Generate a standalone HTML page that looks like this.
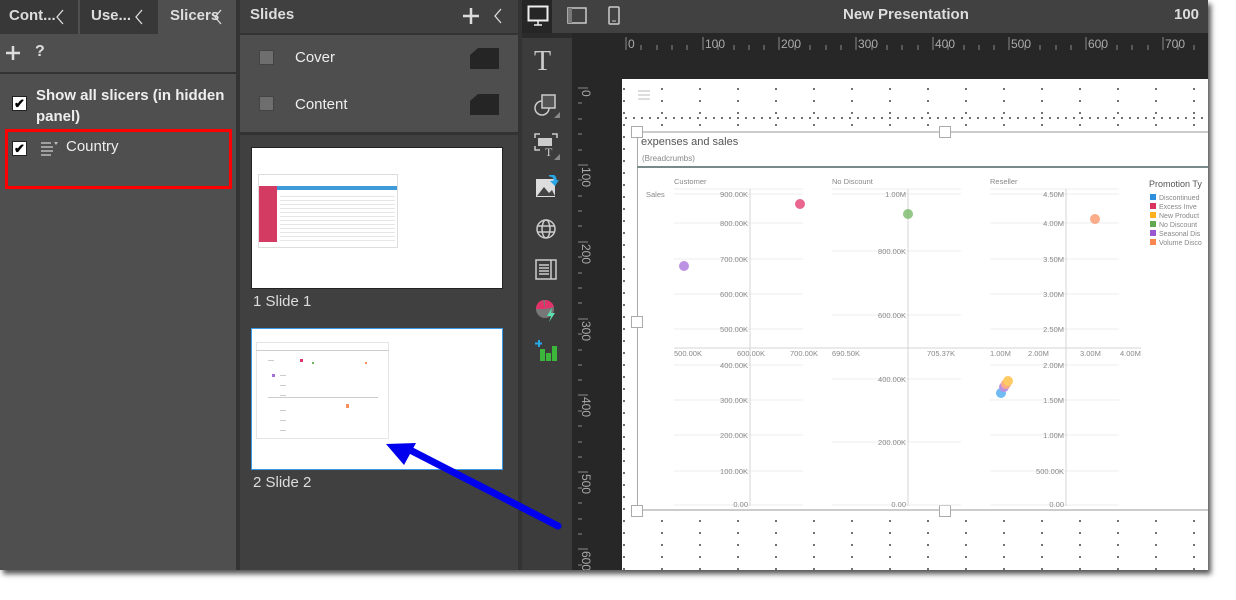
<!DOCTYPE html>
<html><head><meta charset="utf-8"><style>
*{margin:0;padding:0;box-sizing:border-box}
body{width:1236px;height:600px;background:#fff;position:relative;overflow:hidden;font-family:"Segoe UI","Liberation Sans",sans-serif;color:#eee}
.a{position:absolute}
</style></head><body>
<div class="a" style="left:0;top:0;width:1208px;height:570px;background:#2b2b2b;box-shadow:3px 4px 5px #555"></div>
<div class="a" style="left:0;top:0;width:236px;height:570px;background:#4f4f4f"></div>
<div class="a" style="left:0;top:0;width:78px;height:34px;background:#383838"></div>
<div class="a" style="left:80px;top:0;width:78px;height:34px;background:#383838"></div>
<div class="a" style="left:160px;top:0;width:76px;height:34px;background:#4f4f4f"></div>
<div class="a" style="left:9px;top:7px;font-size:15px;font-weight:bold;color:#ddd">Cont...</div>
<svg class="a" style="left:55px;top:9px" width="10" height="16"><path d="M8 1L2 8l6 7" stroke="#ddd" stroke-width="1.3" fill="none"/></svg>
<div class="a" style="left:91px;top:7px;font-size:15px;font-weight:bold;color:#ddd">Use...</div>
<svg class="a" style="left:134px;top:9px" width="10" height="16"><path d="M8 1L2 8l6 7" stroke="#ddd" stroke-width="1.3" fill="none"/></svg>
<div class="a" style="left:170px;top:7px;font-size:15px;font-weight:bold;color:#ddd">Slicers</div>
<svg class="a" style="left:213px;top:9px" width="10" height="16"><path d="M8 1L2 8l6 7" stroke="#ddd" stroke-width="1.3" fill="none"/></svg>
<svg class="a" style="left:5px;top:45px" width="16" height="16"><path d="M8 1v14M1 8h14" stroke="#ddd" stroke-width="2.5"/></svg>
<div class="a" style="left:35px;top:43px;font-size:16px;font-weight:bold;color:#ddd">?</div>
<div class="a" style="left:0;top:72px;width:236px;height:2px;background:#333"></div>
<div class="a" style="left:12px;top:96px;width:15px;height:15px;background:#fff;border:1px solid #222;color:#000;font-size:13px;line-height:13px;text-align:center;font-weight:bold">✔</div>
<div class="a" style="left:36px;top:85px;font-size:15px;font-weight:bold;color:#eee;line-height:21px;width:195px">Show all slicers (in hidden panel)</div>
<div class="a" style="left:5px;top:129px;width:227px;height:60px;border:3px solid #f00"></div>
<div class="a" style="left:12px;top:141px;width:15px;height:15px;background:#fff;border:1px solid #222;color:#000;font-size:13px;line-height:13px;text-align:center;font-weight:bold">✔</div>
<svg class="a" style="left:40px;top:141px" width="20" height="16"><g stroke="#bbb" stroke-width="1.5"><path d="M1 2h10M1 6h12M1 10h12M1 14h10"/></g><path d="M14 1h4l-2 3z" fill="#bbb"/></svg>
<div class="a" style="left:66px;top:138px;font-size:15px;color:#eee">Country</div>
<div class="a" style="left:236px;top:0;width:4px;height:570px;background:#333"></div>
<div class="a" style="left:240px;top:0;width:278px;height:570px;background:#404040"></div>
<div class="a" style="left:240px;top:33px;width:278px;height:2px;background:#333"></div>
<div class="a" style="left:250px;top:6px;font-size:15px;font-weight:bold;color:#ddd">Slides</div>
<svg class="a" style="left:462px;top:7px" width="18" height="18"><path d="M9 1v16M1 9h16" stroke="#ddd" stroke-width="2.5"/></svg>
<svg class="a" style="left:493px;top:8px" width="10" height="16"><path d="M8 1L2 8l6 7" stroke="#ddd" stroke-width="1.3" fill="none"/></svg>
<div class="a" style="left:240px;top:35px;width:278px;height:97px;background:#4e4e4e"></div>
<div class="a" style="left:240px;top:132px;width:278px;height:3px;background:#333"></div>
<div class="a" style="left:259px;top:50px;width:15px;height:15px;background:#6e6e6e;border:1px solid #444"></div>
<div class="a" style="left:295px;top:49px;font-size:15px;color:#eee">Cover</div>
<div class="a" style="left:259px;top:96px;width:15px;height:15px;background:#6e6e6e;border:1px solid #444"></div>
<div class="a" style="left:295px;top:96px;font-size:15px;color:#eee">Content</div>
<svg class="a" style="left:470px;top:48px" width="30" height="22"><path d="M8 0H29V21H0V7z" fill="#252525"/></svg>
<svg class="a" style="left:470px;top:94px" width="30" height="22"><path d="M8 0H29V21H0V7z" fill="#252525"/></svg>
<div class="a" style="left:251px;top:147px;width:252px;height:142px;background:#fff;border:1px solid #222"></div>
<div class="a" style="left:258px;top:174px;width:140px;height:74px;border:1px solid #ddd;background:#fff"></div>
<div class="a" style="left:259px;top:186px;width:18px;height:56px;background:#d33b63"></div>
<div class="a" style="left:277px;top:186px;width:120px;height:4px;background:#3f9ad9"></div>
<div class="a" style="left:280px;top:193px;width:115px;height:48px;background:repeating-linear-gradient(#fff 0 3px,#e6e6e6 3px 4px)"></div>
<div class="a" style="left:253px;top:293px;font-size:15px;color:#ddd">1 Slide 1</div>
<div class="a" style="left:251px;top:328px;width:252px;height:142px;background:#fff;border:1px solid #3a9ae8"></div>
<div class="a" style="left:256px;top:342px;width:133px;height:97px;border:1px solid #e6e6e6"></div>
<div class="a" style="left:256px;top:350px;width:133px;height:1px;background:#ccc"></div>
<div class="a" style="left:253px;top:474px;font-size:15px;color:#ddd">2 Slide 2</div>
<div class="a" style="left:518px;top:0;width:4px;height:570px;background:#333"></div>
<div class="a" style="left:522px;top:0;width:686px;height:33px;background:#414141"></div>
<div class="a" style="left:522px;top:0;width:30px;height:33px;background:#262626"></div>
<svg class="a" style="left:527px;top:5px" width="22" height="22"><rect x="1.5" y="1.5" width="19" height="14" fill="none" stroke="#eee" stroke-width="2"/><path d="M11 16v4M7 20h8" stroke="#eee" stroke-width="1.5"/></svg>
<svg class="a" style="left:567px;top:7px" width="20" height="18"><rect x="1" y="1" width="18" height="15" fill="none" stroke="#ccc" stroke-width="1.5"/><rect x="1" y="1" width="4" height="15" fill="#777"/></svg>
<svg class="a" style="left:608px;top:6px" width="12" height="20"><rect x="1" y="1" width="10" height="17" rx="1" fill="none" stroke="#ccc" stroke-width="1.5"/><path d="M4 15h4" stroke="#ccc"/></svg>
<div class="a" style="left:843px;top:6px;font-size:15px;font-weight:bold;color:#ddd">New Presentation</div>
<div class="a" style="left:1174px;top:6px;font-size:15px;font-weight:bold;color:#ddd">100</div>
<div class="a" style="left:522px;top:38px;width:50px;height:532px;background:#3c3c3c"></div>
<div class="a" style="left:534px;top:47px;font-family:'Liberation Serif',serif;font-size:28px;color:#ccc;line-height:30px">T</div>
<svg class="a" style="left:532px;top:90px" width="30" height="30"><circle cx="10" cy="18" r="7" fill="none" stroke="#ccc" stroke-width="1.5"/><rect x="10" y="5" width="13" height="13" fill="#555" stroke="#ccc" stroke-width="1.5"/><path d="M22 28h6v-6z" fill="#888"/></svg>
<svg class="a" style="left:532px;top:132px" width="30" height="30"><path d="M3 6V2h5M3 14v4h5M20 2h5v4" stroke="#ccc" stroke-width="1.5" fill="none"/><rect x="6" y="6" width="14" height="8" fill="#ccc"/><text x="13" y="24" fill="#ccc" font-size="12" font-family="Liberation Serif">T</text><path d="M22 28h6v-6z" fill="#888"/></svg>
<svg class="a" style="left:535px;top:175px" width="24" height="24"><rect x="1" y="4" width="19" height="18" fill="#ddd"/><path d="M2 21l7-9 5 6 3-3 3 6z" fill="#444"/><path d="M14 0c5 0 7 3 6 8" stroke="#29a8e8" stroke-width="3" fill="none"/><path d="M15 6l5 5 4-6z" fill="#29a8e8"/></svg>
<svg class="a" style="left:535px;top:218px" width="22" height="22"><circle cx="11" cy="11" r="9" fill="none" stroke="#ccc" stroke-width="1.5"/><ellipse cx="11" cy="11" rx="4" ry="9" fill="none" stroke="#ccc" stroke-width="1.5"/><path d="M2 8h18M2 14h18" stroke="#ccc" stroke-width="1.5"/></svg>
<svg class="a" style="left:535px;top:259px" width="22" height="22"><rect x="1" y="1" width="20" height="19" fill="none" stroke="#ccc" stroke-width="1.5"/><path d="M4 6h10M4 9h10M4 12h10M4 15h10M16 1v19" stroke="#ccc" stroke-width="1.5"/></svg>
<svg class="a" style="left:535px;top:298px" width="24" height="24"><circle cx="10" cy="11" r="9" fill="#777"/><path d="M10 11V2a9 9 0 0 1 9 7zM10 11H1a9 9 0 0 1 7-9z" fill="#e0336a"/><path d="M17 10l-5 8h4l-2 6 6-9h-4z" fill="#5de0b0"/></svg>
<svg class="a" style="left:535px;top:340px" width="24" height="24"><path d="M4 0v7M0 3.5h7" stroke="#29a8e8" stroke-width="2"/><rect x="5" y="9" width="5" height="12" fill="#3cb73c"/><rect x="11" y="13" width="5" height="8" fill="#3cb73c"/><rect x="17" y="6" width="5" height="15" fill="#3cb73c"/></svg>
<svg class="a" style="left:572px;top:33px" width="636" height="537">
<rect x="0" y="0" width="636" height="537" fill="#272727"/>
<g stroke="#888" stroke-width="1">
<path d="M54 4v13M131 4v13M207 4v13M284 4v13M361 4v13M437 4v13M514 4v13M591 4v13"/>
<path d="M69 12v5M85 12v5M100 12v5M115 12v5M146 12v5M162 12v5M177 12v5M192 12v5M223 12v5M238 12v5M254 12v5M269 12v5M300 12v5M315 12v5M330 12v5M346 12v5M376 12v5M392 12v5M407 12v5M422 12v5M453 12v5M468 12v5M484 12v5M499 12v5M530 12v5M545 12v5M560 12v5M576 12v5M606 12v5M622 12v5"/>
</g>
<g fill="#aaa" font-size="12" font-family="Liberation Sans"><text x="56" y="15">0</text><text x="133" y="15">100</text><text x="209" y="15">200</text><text x="286" y="15">300</text><text x="363" y="15">400</text><text x="439" y="15">500</text><text x="516" y="15">600</text><text x="593" y="15">700</text></g>
<g stroke="#888"><path d="M6 55h10M6 132h10M6 209h10M6 286h10M6 362h10M6 439h10M6 516h10"/>
<path d="M6 70h4M6 86h4M6 101h4M6 117h4M6 147h4M6 163h4M6 178h4M6 193h4M6 224h4M6 240h4M6 255h4M6 270h4M6 301h4M6 317h4M6 332h4M6 347h4M6 378h4M6 393h4M6 409h4M6 424h4M6 455h4M6 470h4M6 486h4M6 501h4M6 532h4"/></g>
<g fill="#aaa" font-size="12" font-family="Liberation Sans"><text transform="translate(10,57) rotate(90)">0</text><text transform="translate(10,134) rotate(90)">100</text><text transform="translate(10,211) rotate(90)">200</text><text transform="translate(10,288) rotate(90)">300</text><text transform="translate(10,364) rotate(90)">400</text><text transform="translate(10,441) rotate(90)">500</text><text transform="translate(10,518) rotate(90)">600</text></g>
</svg>
<div class="a" style="left:622px;top:79px;width:586px;height:491px;background-color:#fff;background-image:radial-gradient(circle,#555 0.8px,transparent 1.2px);background-size:38px 12px;background-position:21px 4px"></div>
<div class="a" style="left:622px;top:117px;width:586px;height:2px;background-image:radial-gradient(circle,#555 0.8px,transparent 1.2px);background-size:8px 2px"></div>
<svg class="a" style="left:638px;top:90px" width="14" height="12"><path d="M0 1h12M0 5h12M0 9h12" stroke="#bbb"/></svg>
<div class="a" style="left:637px;top:131px;width:571px;height:380px;background:#fff;border-left:1px solid #aaa;border-top:2px solid #ccc;border-bottom:2px solid #ccc"></div>
<div class="a" style="left:637px;top:166px;width:571px;height:2px;background:#7a8a8a"></div>
<div class="a" style="left:641px;top:136px;font-size:11px;color:#555">expenses and sales</div>
<div class="a" style="left:642px;top:154px;font-size:8px;color:#888">(Breadcrumbs)</div>
<svg class="a" style="left:0;top:0" width="1208" height="570">
<g fill="#fff" stroke="#aaa" stroke-width="1"><rect x="631.5" y="126.5" width="11" height="11"/><rect x="939.5" y="126.5" width="11" height="11"/><rect x="631.5" y="316.5" width="11" height="11"/><rect x="631.5" y="505.5" width="11" height="11"/><rect x="939.5" y="505.5" width="11" height="11"/></g>
<g font-family="Liberation Sans" font-size="7.5" fill="#888">
<text x="674" y="184">Customer</text><text x="832" y="184">No Discount</text><text x="990" y="184">Reseller</text><text x="646" y="197">Sales</text>
</g>
<g stroke="#ececec" stroke-width="1">
<path d="M674 189h129M832 189h129M990 189h129"/>
<path d="M674 194h129M674 223h129M674 259h129M674 294h129M674 329h129M674 365h129M674 400h129M674 435h129M674 471h129M674 505h129"/>
<path d="M832 194h129M832 251h129M832 315h129M832 379h129M832 442h129M832 505h129"/>
<path d="M990 194h129M990 223h129M990 259h129M990 294h129M990 329h129M990 365h129M990 400h129M990 435h129M990 471h129M990 505h129"/>
</g>
<g stroke="#d4d4d4" stroke-width="1"><path d="M750 189v317M908 189v317M1066 189v317M674 348h467"/></g>
<g font-family="Liberation Sans" font-size="7.5" fill="#888" text-anchor="end">
<text x="748" y="197">900.00K</text><text x="748" y="226">800.00K</text><text x="748" y="262">700.00K</text><text x="748" y="297">600.00K</text><text x="748" y="332">500.00K</text><text x="748" y="368">400.00K</text><text x="748" y="403">300.00K</text><text x="748" y="438">200.00K</text><text x="748" y="474">100.00K</text><text x="748" y="507">0.00</text>
<text x="906" y="197">1.00M</text><text x="906" y="254">800.00K</text><text x="906" y="318">600.00K</text><text x="906" y="382">400.00K</text><text x="906" y="445">200.00K</text><text x="906" y="507">0.00</text>
<text x="1064" y="197">4.50M</text><text x="1064" y="226">4.00M</text><text x="1064" y="262">3.50M</text><text x="1064" y="297">3.00M</text><text x="1064" y="332">2.50M</text><text x="1064" y="368">2.00M</text><text x="1064" y="403">1.50M</text><text x="1064" y="438">1.00M</text><text x="1064" y="474">500.00K</text><text x="1064" y="507">0.00</text>
</g>
<g font-family="Liberation Sans" font-size="7.5" fill="#888">
<text x="674" y="356">500.00K</text><text x="737" y="356">600.00K</text><text x="790" y="356">700.00K</text><text x="832" y="356">690.50K</text><text x="927" y="356">705.37K</text>
<text x="990" y="356">1.00M</text><text x="1028" y="356">2.00M</text><text x="1080" y="356">3.00M</text><text x="1120" y="356">4.00M</text>
</g>
<g opacity="0.75"><circle cx="684" cy="266" r="5" fill="#a56ed8"/><circle cx="800" cy="204" r="5" fill="#e0336a"/><circle cx="908" cy="214" r="5" fill="#6fb55f"/><circle cx="1095" cy="219" r="5" fill="#fa9060"/>
<circle cx="1001" cy="393" r="5" fill="#42a5f0"/><circle cx="1004" cy="387" r="5" fill="#a56ed8"/><circle cx="1006" cy="384" r="5" fill="#fa9060"/><circle cx="1008" cy="381" r="5" fill="#ffb830"/></g>
<text x="1149" y="187" font-family="Liberation Sans" font-size="9" fill="#555">Promotion Ty</text>
<g font-family="Liberation Sans" font-size="7" fill="#888">
<rect x="1150" y="194" width="6" height="6" fill="#2d8fdc"/><text x="1159" y="200">Discontinued</text>
<rect x="1150" y="203" width="6" height="6" fill="#d9335d"/><text x="1159" y="209">Excess Inve</text>
<rect x="1150" y="212" width="6" height="6" fill="#ffb020"/><text x="1159" y="218">New Product</text>
<rect x="1150" y="221" width="6" height="6" fill="#62a84e"/><text x="1159" y="227">No Discount</text>
<rect x="1150" y="230" width="6" height="6" fill="#9a58d0"/><text x="1159" y="236">Seasonal Dis</text>
<rect x="1150" y="239" width="6" height="6" fill="#fa8750"/><text x="1159" y="245">Volume Disco</text>
</g>
<g fill="#ccc"><rect x="268" y="360" width="6" height="1"/><rect x="280" y="375" width="6" height="1"/><rect x="280" y="385" width="6" height="1"/><rect x="280" y="395" width="6" height="1"/><rect x="280" y="410" width="6" height="1"/><rect x="280" y="420" width="6" height="1"/><rect x="280" y="430" width="6" height="1"/><rect x="268" y="397" width="110" height="1"/></g>
<rect x="300" y="359" width="3" height="3" fill="#e0336a"/><rect x="272" y="374" width="3" height="3" fill="#a56ed8"/><rect x="312" y="362" width="2" height="2" fill="#6fb55f"/><rect x="346" y="404" width="3" height="4" fill="#fa9060"/><rect x="365" y="362" width="2" height="2" fill="#fa9060"/>
<path d="M558 526L410 450" stroke="#0000ee" stroke-width="7" stroke-linecap="round"/>
<path d="M386 444L416 443L404 465z" fill="#0000ee"/>
</svg>
</body></html>
